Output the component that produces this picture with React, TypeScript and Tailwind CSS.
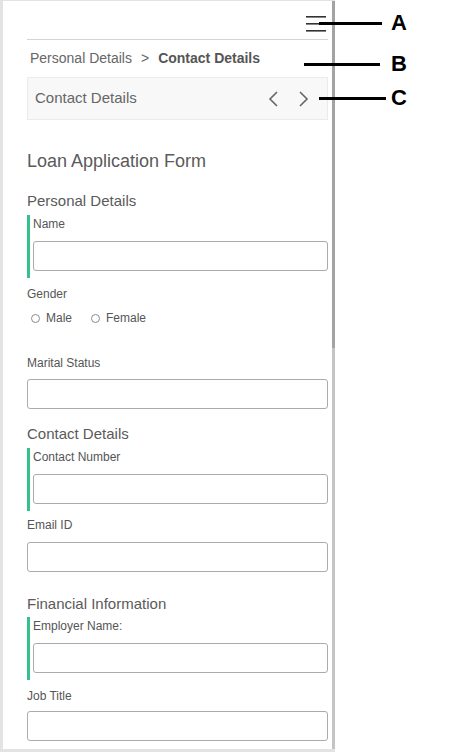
import type { ReactNode } from "react";

const font = { fontFamily: '"Liberation Sans", Arial, sans-serif' };

function Input({ className = "" }: { className?: string }) {
  return (
    <input
      type="text"
      className={`block h-[30px] w-full rounded-[3px] border border-[#ababab] bg-white outline-none ${className}`}
    />
  );
}

function Label({ children, className = "" }: { children: ReactNode; className?: string }) {
  return <p className={`text-[12px] leading-[18px] text-[#555] ${className}`}>{children}</p>;
}

function Heading({ children, className = "" }: { children: ReactNode; className?: string }) {
  return <h3 className={`text-[15px] leading-[20px] text-[#5a5a5a] ${className}`}>{children}</h3>;
}

function MarkedField({ label, className = "" }: { label: string; className?: string }) {
  return (
    <div className={`border-l-[3px] border-[#36c08e] pb-[7px] pl-[3px] ${className}`}>
      <Label>{label}</Label>
      <Input className="mt-[8px]" />
    </div>
  );
}

function Radio({ label }: { label: string }) {
  return (
    <label className="flex items-center gap-[6px] text-[12px] leading-[18px] text-[#555]">
      <span className="block h-[9px] w-[9px] rounded-full border border-[#8a8a8a] bg-white" />
      {label}
    </label>
  );
}

function Annotation({ letter, lineLeft, lineWidth, y }: { letter: string; lineLeft: number; lineWidth: number; y: number }) {
  return (
    <>
      <div
        className="absolute h-[3px] bg-black"
        style={{ left: lineLeft, width: lineWidth, top: y - 1 }}
      />
      <span
        className="absolute text-[22px] font-bold leading-[22px] text-black"
        style={{ left: 391, top: y - 11 }}
      >
        {letter}
      </span>
    </>
  );
}

export default function App() {
  return (
    <div className="relative h-[752px] w-[466px] overflow-hidden bg-white" style={font}>
      <div className="flex h-[752px] w-[335px] border-b-[3px] border-l-[3px] border-t border-[#e3e3e3]">
        <div className="w-[329px] bg-white pl-[24px] pr-[4px]">
          <div className="flex h-[39px] justify-end border-b border-[#d4d4d4] pr-[2px] pt-[15px]">
            <svg width="20" height="16" viewBox="0 0 20 16" fill="none" stroke="#333" strokeWidth="1.6">
              <line x1="0" y1="0.8" x2="20" y2="0.8" />
              <line x1="0" y1="7.8" x2="20" y2="7.8" />
              <line x1="0" y1="14.8" x2="20" y2="14.8" />
            </svg>
          </div>

          <div className="mt-[8px] flex items-center pl-[3px] text-[14px] leading-[20px]">
            <span className="text-[#666]">Personal Details</span>
            <span className="mx-[9px] text-[#666]">&gt;</span>
            <span className="font-bold text-[#555]">Contact Details</span>
          </div>

          <div className="mt-[9px] flex h-[43px] items-center justify-between border border-[#ebebeb] bg-[#f8f8f8] pl-[7px] pr-[18px]">
            <span className="text-[15px] text-[#666]">Contact Details</span>
            <div className="flex items-center gap-[21px]">
              <svg width="10" height="16" viewBox="0 0 10 16" fill="none" stroke="#666" strokeWidth="1.6">
                <polyline points="9,1 2,8 9,15" />
              </svg>
              <svg width="10" height="16" viewBox="0 0 10 16" fill="none" stroke="#666" strokeWidth="1.6">
                <polyline points="1,1 8,8 1,15" />
              </svg>
            </div>
          </div>

          <h2 className="mt-[29px] text-[18px] leading-[24px] text-[#5a5a5a]">Loan Application Form</h2>

          <Heading className="mt-[18px]">Personal Details</Heading>
          <MarkedField label="Name" className="mt-[4px]" />

          <Label className="mt-[7px]">Gender</Label>
          <div className="mt-[6px] flex items-center gap-[19px] pl-[4px]">
            <Radio label="Male" />
            <Radio label="Female" />
          </div>

          <Label className="mt-[27px]">Marital Status</Label>
          <Input className="mt-[7px]" />

          <Heading className="mt-[15px]">Contact Details</Heading>
          <MarkedField label="Contact Number" className="mt-[4px]" />

          <Label className="mt-[5px]">Email ID</Label>
          <Input className="mt-[8px]" />

          <Heading className="mt-[22px]">Financial Information</Heading>
          <MarkedField label="Employer Name:" className="mt-[3px]" />

          <Label className="mt-[7px]">Job Title</Label>
          <Input className="mt-[6px]" />
        </div>
        <div className="flex w-[3px] flex-col">
          <div className="h-[347px] bg-[#a3a3a3]" />
          <div className="flex-1 bg-[#c4c4c4]" />
        </div>
      </div>

      <Annotation letter="A" lineLeft={319} lineWidth={63} y={23} />
      <Annotation letter="B" lineLeft={304} lineWidth={76} y={64} />
      <Annotation letter="C" lineLeft={319} lineWidth={67} y={98} />
    </div>
  );
}
